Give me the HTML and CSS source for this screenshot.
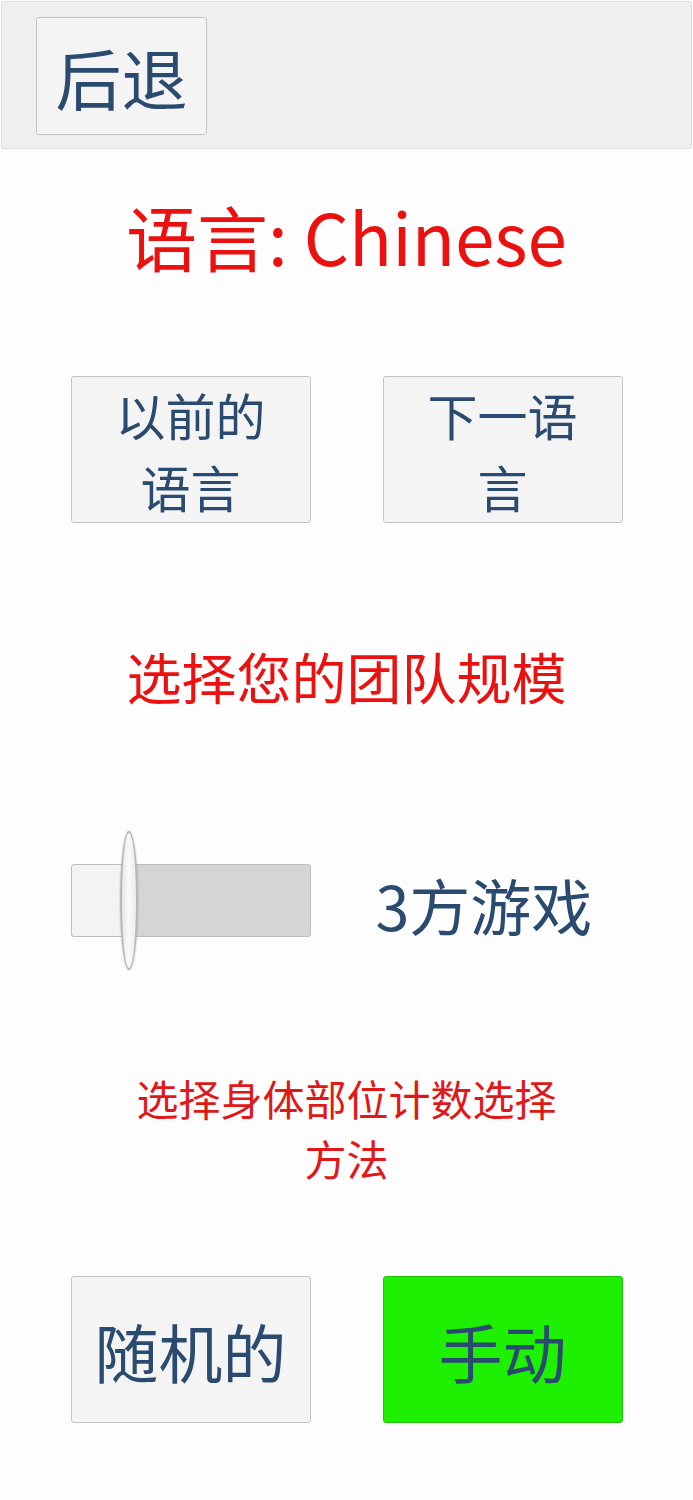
FILE: index.html
```html
<!DOCTYPE html>
<html lang="zh">
<head>
    <meta charset="UTF-8">
    <meta name="viewport" content="width=device-width, initial-scale=1.0">
    <title>设置</title>
    <link rel="stylesheet" href="styles.css">
</head>
<body>
    <div class="topbar">
        <button class="btn back">后退</button>
    </div>

    <div class="page">
        <h1 class="language">语言: Chinese</h1>

        <div class="pair lang-pair">
            <button class="btn two-line">以前的<br>语言</button>
            <button class="btn two-line">下一语<br>言</button>
        </div>

        <h2 class="heading">选择您的团队规模</h2>

        <div class="slider-row">
            <div class="slider">
                <div class="slider-fill"></div>
                <div class="slider-thumb"></div>
            </div>
            <div class="slider-label">3方游戏</div>
        </div>

        <p class="note">选择身体部位计数选择方法</p>

        <div class="pair mode-pair">
            <button class="btn big">随机的</button>
            <button class="btn big active">手动</button>
        </div>
    </div>
</body>
</html>
```

FILE: styles.css
```css
body {
    margin: 0;
    background: #fdfdfd;
    font-family: "Noto Sans CJK SC", "Noto Sans", sans-serif;
    color: #2b4a6f;
}

.topbar {
    box-sizing: border-box;
    margin: 1px 1px 0 1px;
    height: 148px;
    padding: 15px 34px;
    background: #efefef;
    border: 1px solid #dedede;
    border-radius: 3px;
}

.btn {
    box-sizing: border-box;
    font-family: inherit;
    color: #2b4a6f;
    background: #f4f4f4;
    border: 1px solid #c4c4c4;
    border-radius: 3px;
    padding: 0;
    cursor: pointer;
}

.back {
    width: 171px;
    height: 118px;
    font-size: 66px;
    line-height: 1;
}

.page {
    display: flex;
    flex-direction: column;
    align-items: center;
}

.language {
    margin: 51px 0 0;
    font-size: 71px;
    font-weight: 400;
    line-height: 70px;
    color: #ec1111;
}

.pair {
    display: grid;
    grid-template-columns: 240px 240px;
    gap: 72px;
}

.pair .btn {
    height: 147px;
}

.lang-pair {
    margin-top: 106px;
}

.two-line {
    font-size: 50px;
    line-height: 72px;
}

.heading {
    margin: 122px 0 0;
    font-size: 55px;
    font-weight: 400;
    line-height: 60px;
    color: #ec1111;
}

.slider-row {
    margin-top: 125px;
    height: 140px;
    width: 552px;
    display: grid;
    grid-template-columns: 240px 1fr;
    gap: 65px;
    align-items: center;
}

.slider {
    position: relative;
    box-sizing: border-box;
    height: 73px;
    background: #d5d5d5;
    border: 1px solid #bdbdbd;
    border-radius: 3px;
}

.slider-fill {
    width: 56px;
    height: 100%;
    background: #f3f3f3;
    border-radius: 3px 0 0 3px;
}

.slider-thumb {
    position: absolute;
    left: 48px;
    top: -34px;
    box-sizing: border-box;
    width: 18px;
    height: 139px;
    border-radius: 50%;
    background: linear-gradient(to right, #e6e6e6, #fafafa 45%, #ececec);
    border: 2px solid #b8b8b8;
    box-shadow: 0 0 2px rgba(0, 0, 0, 0.25);
}

.slider-label {
    font-size: 61px;
    line-height: 1;
    padding-top: 8px;
    white-space: nowrap;
}

.note {
    margin: 98px 0 0;
    max-width: 440px;
    font-size: 42px;
    line-height: 60px;
    text-align: center;
    color: #e01818;
}

.mode-pair {
    margin-top: 88px;
}

.big {
    font-size: 64px;
    line-height: 1;
}

.active {
    background: #1ef002;
    border-color: #1ac405;
}
```
